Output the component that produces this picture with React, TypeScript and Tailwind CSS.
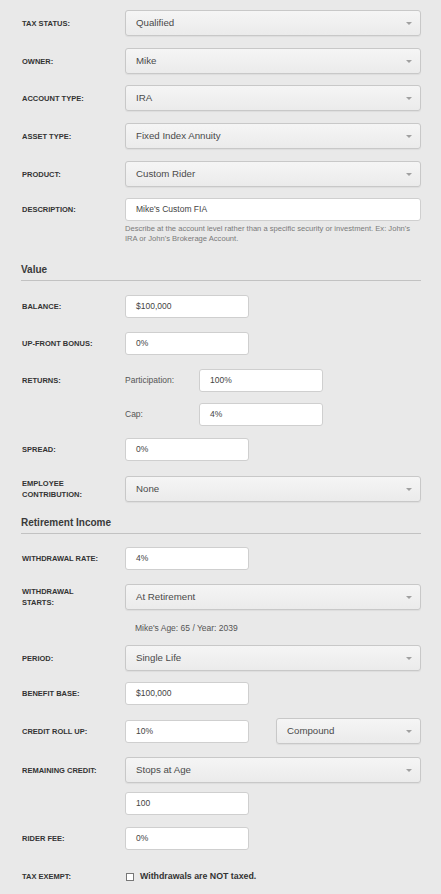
import type { ReactNode } from "react";

const FONT = { fontFamily: '"Liberation Sans", Arial, sans-serif' };

function Caret() {
  return (
    <svg width="6" height="3" viewBox="0 0 6 3" className="shrink-0">
      <path d="M0 0 L6 0 L3 3 Z" fill="#a0a0a0" />
    </svg>
  );
}

function Select({ value, className = "" }: { value: string; className?: string }) {
  return (
    <div
      className={`flex h-[26px] items-center justify-between rounded-[3px] border border-[#c8c8c8] bg-gradient-to-b from-[#f5f5f5] to-[#ebebeb] pl-[10px] pr-[8px] text-[9.7px] text-[#4a4a4a] shadow-[0_1px_1px_rgba(0,0,0,0.05)] ${className}`}
    >
      <span>{value}</span>
      <Caret />
    </div>
  );
}

function Input({ value, className = "w-[124px]" }: { value: string; className?: string }) {
  return (
    <div
      className={`flex h-[23px] items-center rounded-[3px] border border-[#cfcfcf] bg-white pl-[10px] text-[8.5px] text-[#444] ${className}`}
    >
      {value}
    </div>
  );
}

function Row({ label, mt, children }: { label?: ReactNode; mt: string; children: ReactNode }) {
  return (
    <div className={`flex items-center ${mt}`}>
      <div className="w-[103px] shrink-0 text-[7.5px] font-bold uppercase leading-[11px] text-[#333]">
        {label}
      </div>
      <div className="flex min-w-0 flex-1 items-center">{children}</div>
    </div>
  );
}

function Heading({ title, mt }: { title: string; mt: string }) {
  return (
    <div className={`${mt} ml-[-1px] border-b border-[#c2c2c2] pb-[3px] text-[10px] font-bold leading-[14px] text-[#3a3a3a]`}>
      {title}
    </div>
  );
}

export default function App() {
  return (
    <div style={FONT} className="min-h-[894px] w-[441px] bg-[#e9e9e9] pl-[22px] pr-[20px] pt-[10px]">
      <Row label="Tax Status:" mt="mt-0">
        <Select value="Qualified" className="flex-1" />
      </Row>
      <Row label="Owner:" mt="mt-[12px]">
        <Select value="Mike" className="flex-1" />
      </Row>
      <Row label="Account Type:" mt="mt-[11px]">
        <Select value="IRA" className="flex-1" />
      </Row>
      <Row label="Asset Type:" mt="mt-[12px]">
        <Select value="Fixed Index Annuity" className="flex-1" />
      </Row>
      <Row label="Product:" mt="mt-[12px]">
        <Select value="Custom Rider" className="flex-1" />
      </Row>
      <Row label="Description:" mt="mt-[11px]">
        <Input value="Mike's Custom FIA" className="flex-1" />
      </Row>
      <div className="ml-[103px] mt-[3px] pr-[4px] text-[7.6px] leading-[10px] text-[#7a7a7a]">
        Describe at the account level rather than a specific security or investment. Ex: John's IRA or John's
        Brokerage Account.
      </div>

      <Heading title="Value" mt="mt-[19px]" />
      <Row label="Balance:" mt="mt-[14px]">
        <Input value="$100,000" />
      </Row>
      <Row label="Up-Front Bonus:" mt="mt-[14px]">
        <Input value="0%" />
      </Row>
      <Row label="Returns:" mt="mt-[14px]">
        <span className="w-[74px] text-[8.5px] text-[#555]">Participation:</span>
        <Input value="100%" />
      </Row>
      <Row mt="mt-[11px]">
        <span className="w-[74px] text-[8.5px] text-[#555]">Cap:</span>
        <Input value="4%" />
      </Row>
      <Row label="Spread:" mt="mt-[12px]">
        <Input value="0%" />
      </Row>
      <Row
        label={
          <>
            Employee
            <br />
            Contribution:
          </>
        }
        mt="mt-[15px]"
      >
        <Select value="None" className="flex-1" />
      </Row>

      <Heading title="Retirement Income" mt="mt-[14px]" />
      <Row label="Withdrawal Rate:" mt="mt-[13px]">
        <Input value="4%" />
      </Row>
      <Row
        label={
          <>
            Withdrawal
            <br />
            Starts:
          </>
        }
        mt="mt-[14px]"
      >
        <Select value="At Retirement" className="flex-1" />
      </Row>
      <div className="ml-[113px] mt-[12px] text-[8.5px] leading-[12px] text-[#555]">Mike's Age: 65 / Year: 2039</div>
      <Row label="Period:" mt="mt-[11px]">
        <Select value="Single Life" className="flex-1" />
      </Row>
      <Row label="Benefit Base:" mt="mt-[11px]">
        <Input value="$100,000" />
      </Row>
      <Row label="Credit Roll Up:" mt="mt-[13px]">
        <Input value="10%" />
        <Select value="Compound" className="ml-[27px] flex-1" />
      </Row>
      <Row label="Remaining Credit:" mt="mt-[13px]">
        <Select value="Stops at Age" className="flex-1" />
      </Row>
      <Row mt="mt-[9px]">
        <Input value="100" />
      </Row>
      <Row label="Rider Fee:" mt="mt-[12px]">
        <Input value="0%" />
      </Row>
      <Row label="Tax Exempt:" mt="mt-[20px]">
        <label className="flex items-center gap-[6px] pl-[1px]">
          <span className="h-[8px] w-[8px] border border-[#777] bg-white" />
          <span className="text-[8.8px] font-bold text-[#333]">Withdrawals are NOT taxed.</span>
        </label>
      </Row>
    </div>
  );
}
